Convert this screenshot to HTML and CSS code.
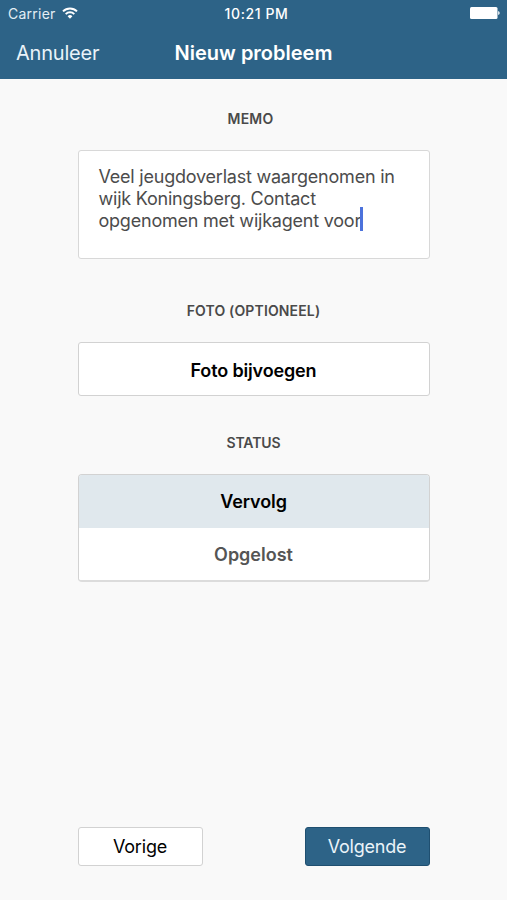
FILE: index.html
```html
<!DOCTYPE html>
<html lang="nl">
<head>
    <meta charset="UTF-8">
    <meta name="viewport" content="width=device-width, initial-scale=1.0">
    <title>Nieuw probleem</title>
    <link rel="stylesheet" href="styles.css">
</head>
<body>
    <div class="app">
        <header class="header">
            <div class="statusbar">
                <div class="carrier">
                    <span class="carrier-name">Carrier</span>
                    <svg class="wifi" viewBox="0 0 16 12" width="16" height="12" fill="none" stroke="#fff" stroke-width="2">
                        <path d="M1 4.4a10 10 0 0 1 14 0"/>
                        <path d="M3.7 7.1a6.2 6.2 0 0 1 8.6 0"/>
                        <path d="M8 11.8L5.6 9.2a3.5 3.5 0 0 1 4.8 0z" fill="#fff" stroke="none"/>
                    </svg>
                </div>
                <span class="time">10:21 PM</span>
                <svg class="battery" viewBox="0 0 30 12" width="30" height="12" fill="#fff">
                    <rect x="0" y="0" width="27.5" height="12" rx="1.5"/>
                    <path d="M28.2 4a2.1 2.1 0 0 1 0 4z"/>
                </svg>
            </div>
            <div class="navbar">
                <a class="cancel">Annuleer</a>
                <h1 class="title">Nieuw probleem</h1>
            </div>
        </header>
        <main class="form">
            <h2 class="label label-memo">MEMO</h2>
            <div class="memo">
                <p>Veel jeugdoverlast waargenomen in<br>wijk Koningsberg. Contact<br>opgenomen met wijkagent voor<span class="caret"></span></p>
            </div>
            <h2 class="label label-foto">FOTO (OPTIONEEL)</h2>
            <button class="foto">Foto bijvoegen</button>
            <h2 class="label label-status">STATUS</h2>
            <div class="options">
                <button class="option active">Vervolg</button>
                <button class="option">Opgelost</button>
            </div>
        </main>
        <footer class="footer">
            <button class="btn prev">Vorige</button>
            <button class="btn next">Volgende</button>
        </footer>
    </div>
</body>
</html>
```
FILE: styles.css
```css
*{
    margin: 0;
    padding: 0;
    box-sizing: border-box;
    font-family: Inter, "Liberation Sans", sans-serif;
}
body{
    background: #f9f9f9;
}
.app{
    height: 900px;
    display: flex;
    flex-direction: column;
    overflow: hidden;
}
.header{
    height: 79px;
    background: #2d6387;
    color: #fff;
}
.statusbar{
    height: 27px;
    padding: 0 7px 0 8px;
    display: grid;
    grid-template-columns: 1fr auto 1fr;
    align-items: center;
    font-size: 14px;
}
.carrier{
    display: flex;
    align-items: center;
    gap: 6px;
    color: #e3eef5;
    letter-spacing: 0.25px;
}
.wifi{
    margin-top: -2px;
}
.time{
    font-size: 14px;
    font-weight: 500;
    letter-spacing: 0.6px;
    padding-left: 5px;
}
.battery{
    justify-self: end;
    margin-top: -1px;
}
.navbar{
    height: 51px;
    padding: 0 16px;
    display: grid;
    grid-template-columns: 1fr auto 1fr;
    align-items: center;
}
.cancel{
    font-size: 20px;
    letter-spacing: -0.2px;
    color: #eaf3f9;
}
.title{
    font-size: 20px;
    font-weight: 600;
}
.form{
    width: 352px;
    margin: 0 auto;
    padding-top: 30px;
    flex: 1;
}
.label{
    font-size: 14px;
    line-height: 20px;
    font-weight: 600;
    color: #4a4a4a;
    text-align: center;
}
.label-memo{
    padding-right: 6px;
    letter-spacing: 0.2px;
}
.memo{
    height: 109px;
    margin-top: 21px;
    padding: 15px 20px;
    background: #fff;
    border: 1px solid #d8d8d8;
    border-radius: 3px;
    font-size: 18px;
    line-height: 22px;
    letter-spacing: -0.22px;
    color: #4c4c4c;
    white-space: nowrap;
}
.caret{
    display: inline-block;
    width: 3px;
    height: 24px;
    background: #4c72dc;
    vertical-align: -5px;
    margin: -9px 0 0 -1px;
    transform: translateY(-1px);
}
.label-foto{
    margin-top: 42px;
    font-weight: 600;
    letter-spacing: 0.15px;
}
.foto, .option, .btn{
    display: block;
    width: 100%;
    font-size: 18px;
    background: #fff;
    border: 1px solid #d2d2d2;
    border-radius: 3px;
    color: #000;
}
.foto{
    height: 54px;
    margin-top: 21px;
    padding-top: 2px;
    font-weight: 600;
    letter-spacing: -0.15px;
}
.label-status{
    margin-top: 37px;
    font-weight: 600;
    letter-spacing: -0.1px;
}
.options{
    margin-top: 21px;
    border: 1px solid #d2d2d2;
    border-bottom: 2px solid #dcdcdc;
    border-radius: 4px;
    overflow: hidden;
}
.option{
    height: 52px;
    padding-top: 1px;
    border: 0;
    border-radius: 0;
    font-weight: 600;
    color: #555;
}
.option.active{
    height: 53px;
    padding-top: 0;
    background: #e0e8ed;
    color: #000;
    letter-spacing: -0.1px;
}
.footer{
    width: 352px;
    margin: 0 auto 34px;
    display: flex;
    justify-content: space-between;
}
.btn{
    width: 125px;
    height: 39px;
    letter-spacing: -0.2px;
}
.next{
    background: #2d6387;
    border-color: #1f4f70;
    color: #eaf3f9;
}
```
